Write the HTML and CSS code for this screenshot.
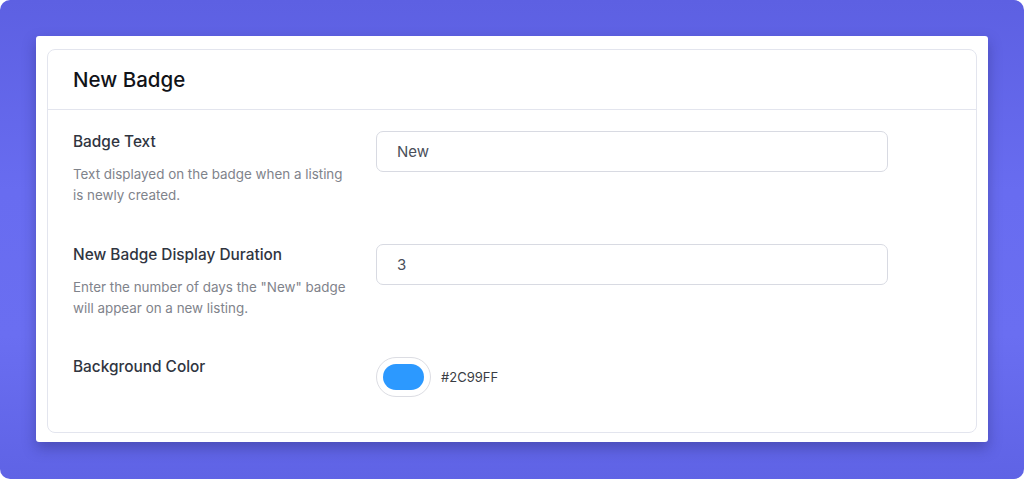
FILE: index.html
```html
<!DOCTYPE html>
<html>
<head>
<meta charset="utf-8">
<link rel="stylesheet" href="styles.css">
</head>
<body>
<div class="frame">
  <div class="panel">
    <div class="card">
      <div class="card-header">
        <h1 class="title">New Badge</h1>
      </div>
      <div class="card-body">
        <div class="row">
          <div class="info">
            <div class="label">Badge Text</div>
            <div class="desc">Text displayed on the badge when a listing is newly created.</div>
          </div>
          <div class="control">
            <div class="input">New</div>
          </div>
        </div>
        <div class="row">
          <div class="info">
            <div class="label">New Badge Display Duration</div>
            <div class="desc">Enter the number of days the "New" badge will appear on a new listing.</div>
          </div>
          <div class="control">
            <div class="input">3</div>
          </div>
        </div>
        <div class="row row-last">
          <div class="info">
            <div class="label">Background Color</div>
          </div>
          <div class="control color-control">
            <div class="swatch"><div class="swatch-fill"></div></div>
            <span class="hex">#2C99FF</span>
          </div>
        </div>
      </div>
    </div>
  </div>
</div>
</body>
</html>
```

FILE: styles.css
```css
* { box-sizing: border-box; }
html, body { margin: 0; padding: 0; background: #ffffff; }
body { font-family: Inter, "Noto Sans", sans-serif; }

.frame {
  width: 1024px;
  height: 479px;
  border-radius: 10px;
  background: linear-gradient(180deg, #5d60e2 0%, #686cf0 40%, #6a6ef1 70%, #5f63e5 100%);
  padding: 36px;
  overflow: hidden;
}

.panel {
  width: 952px;
  height: 406px;
  background: #ffffff;
  border-radius: 3px;
  box-shadow: 0 6px 14px rgba(28, 28, 90, 0.35);
  padding: 13px 11px 9px 11px;
}

.card {
  width: 930px;
  height: 384px;
  border: 1px solid #e3e5ee;
  border-radius: 8px;
  background: #ffffff;
}

.card-header {
  height: 60px;
  border-bottom: 1px solid #e3e5ee;
  display: flex;
  align-items: center;
  padding-left: 25px;
}

.title {
  margin: 0;
  font-size: 20.5px;
  font-weight: 500;
  color: #111318;
}

.card-body {
  padding: 21px 0 0 25px;
  display: flex;
  flex-direction: column;
  gap: 38px;
}

.row {
  display: grid;
  grid-template-columns: 303px 512px;
}

.row-last { margin-top: -1px; }

.label {
  font-size: 15.4px;
  line-height: 22px;
  font-weight: 500;
  color: #30353f;
}

.desc {
  margin-top: 11px;
  font-size: 13.4px;
  line-height: 21px;
  color: #7f838b;
  width: 280px;
}

.control { padding-top: 0; }

.input {
  height: 41px;
  border: 1px solid #d8dae2;
  border-radius: 7px;
  padding-left: 20px;
  display: flex;
  align-items: center;
  font-size: 15px;
  color: #4a4f5a;
}

.color-control {
  display: flex;
  align-items: center;
  gap: 10px;
  padding-top: 0;
  height: 41px;
}

.swatch {
  width: 55px;
  height: 40px;
  border: 1px solid #dcdde3;
  border-radius: 20px;
  padding: 6px;
  background: #fff;
}

.swatch-fill {
  width: 41px;
  height: 26px;
  border-radius: 13px;
  background: #2c99ff;
}

.hex {
  font-size: 13px;
  color: #3a3d44;
}
```
